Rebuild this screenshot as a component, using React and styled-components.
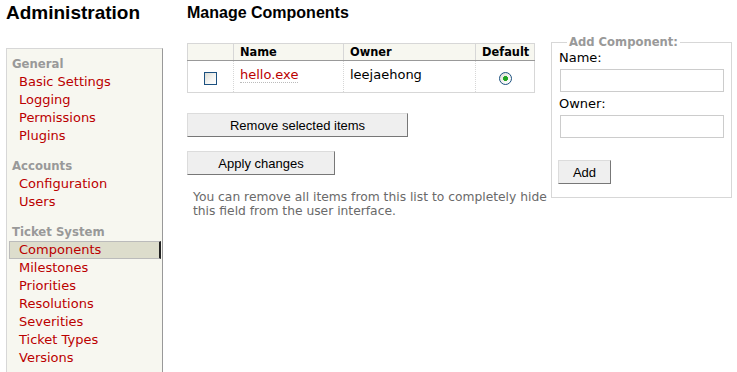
import React from 'react';
import styled, { createGlobalStyle, css } from 'styled-components';

const GlobalStyle = createGlobalStyle`
  html, body {
    margin: 0;
    padding: 0;
    background: #fff;
  }
  body {
    font-family: "DejaVu Sans", Verdana, sans-serif;
    font-size: 13px;
    color: #000;
  }
`;

const groups = [
  { title: 'General', items: ['Basic Settings', 'Logging', 'Permissions', 'Plugins'] },
  { title: 'Accounts', items: ['Configuration', 'Users'] },
  {
    title: 'Ticket System',
    items: ['Components', 'Milestones', 'Priorities', 'Resolutions', 'Severities', 'Ticket Types', 'Versions'],
  },
];

function App() {
  return (
    <>
      <GlobalStyle />
      <Page>
        <Side>
          <Title>Administration</Title>
          <Tabs>
            {groups.map((g) => (
              <Group key={g.title}>
                <GroupTitle>{g.title}</GroupTitle>
                {g.items.map((item) => (
                  <TabLink key={item} href="#" $active={item === 'Components'}>
                    {item}
                  </TabLink>
                ))}
              </Group>
            ))}
          </Tabs>
        </Side>

        <Main>
          <Heading>Manage Components</Heading>
          <Content>
            <div>
              <Listing>
                <thead>
                  <tr>
                    <Th $w={46} />
                    <Th $w={110}>Name</Th>
                    <Th $w={132}>Owner</Th>
                    <Th $w={59} $center>Default</Th>
                  </tr>
                </thead>
                <tbody>
                  <tr>
                    <Td $center>
                      <Check type="checkbox" />
                    </Td>
                    <Td>
                      <NameLink href="#">hello.exe</NameLink>
                    </Td>
                    <Td>leejaehong</Td>
                    <Td $center>
                      <Radio type="radio" name="default" defaultChecked />
                    </Td>
                  </tr>
                </tbody>
              </Listing>
              <Button type="button" $w={221} $top={20}>Remove selected items</Button>
              <Button type="button" $w={148} $top={14}>Apply changes</Button>
              <Help>
                You can remove all items from this list to completely hide
                <br />
                this field from the user interface.
              </Help>
            </div>

            <AddBox>
              <Legend>Add Component:</Legend>
              <Label $first>Name:</Label>
              <TextInput type="text" />
              <Label>Owner:</Label>
              <TextInput type="text" />
              <AddButton type="button">Add</AddButton>
            </AddBox>
          </Content>
        </Main>
      </Page>
    </>
  );
}

export default App;

const Page = styled.div`
  display: flex;
  align-items: flex-start;
  padding: 2px 0 0 6px;
`;

const Side = styled.div`
  width: 157px;
  flex: none;
`;

const Title = styled.h1`
  margin: 0;
  font: bold 19px/22px "Liberation Sans", Arial, sans-serif;
  color: #000;
`;

const Tabs = styled.nav`
  margin-top: 24px;
  box-sizing: border-box;
  background: #f7f7f0;
  border: 1px solid #d7d7d7;
  border-right-color: #999;
  padding: 7px 0 14px;
`;

const Group = styled.div`
  & + & {
    margin-top: 13px;
  }
`;

const GroupTitle = styled.div`
  padding-left: 5px;
  font-weight: bold;
  font-size: 11.7px;
  line-height: 17px;
  color: #999;
`;

const TabLink = styled.a`
  display: block;
  margin: 0 1px 0 2px;
  padding-left: 9px;
  border: 1px solid transparent;
  line-height: 16px;
  font-size: 13px;
  color: #b00;
  text-decoration: none;

  ${(p) =>
    p.$active &&
    css`
      background: #ddc;
      border-color: #bbb;
      border-right: 2px solid #222;
    `}
`;

const Main = styled.div`
  margin-left: 24px;
  flex: none;
`;

const Heading = styled.h2`
  margin: 2px 0 0;
  font: bold 16px/18px "Liberation Sans", Arial, sans-serif;
  color: #000;
`;

const Content = styled.div`
  display: grid;
  grid-template-columns: 362px 181px;
  column-gap: 2px;
  align-items: start;
  margin-top: 14px;
`;

const Listing = styled.table`
  margin-top: 7px;
  width: 348px;
  table-layout: fixed;
  border-collapse: collapse;
  border: 1px solid #d7d7d7;
`;

const Th = styled.th`
  width: ${(p) => p.$w}px;
  height: 17px;
  padding: 0 6px;
  box-sizing: border-box;
  background: #f7f7f0;
  border-left: 1px solid #d7d7d7;
  border-bottom: 1px solid #999;
  font-size: 11.4px;
  font-weight: bold;
  line-height: 15px;
  text-align: ${(p) => (p.$center ? 'center' : 'left')};
  vertical-align: middle;
  color: #000;
`;

const Td = styled.td`
  height: 32px;
  padding: 6px 6px 0;
  box-sizing: border-box;
  border: 1px dotted #d7d7d7;
  line-height: 16px;
  vertical-align: top;
  text-align: ${(p) => (p.$center ? 'center' : 'left')};
`;

const NameLink = styled.a`
  color: #b00;
  text-decoration: none;
  border-bottom: 1px dotted #bbb;
`;

const Check = styled.input`
  appearance: none;
  display: block;
  width: 13px;
  height: 13px;
  margin: 5px auto 0;
  box-sizing: border-box;
  border: 1px solid #1c5180;
  background: linear-gradient(135deg, #dcdcd4 0%, #f6f6f4 60%, #fff 100%);
`;

const Radio = styled.input`
  appearance: none;
  display: block;
  width: 13px;
  height: 13px;
  margin: 5px auto 0;
  box-sizing: border-box;
  border: 1px solid #1c5180;
  border-radius: 50%;
  background: radial-gradient(circle, #21a421 0 2.2px, transparent 2.8px),
    linear-gradient(135deg, #dcdcd4 0%, #f6f6f4 60%, #fff 100%);
`;

const Button = styled.button`
  display: block;
  width: ${(p) => p.$w}px;
  height: 24px;
  margin-top: ${(p) => p.$top}px;
  padding: 0;
  box-sizing: border-box;
  background: #efefef;
  border: 1px solid;
  border-color: #dcdcdc #777 #777 #dcdcdc;
  font: 13px "Liberation Sans", Arial, sans-serif;
  color: #000;
`;

const Help = styled.p`
  margin: 15px 0 0;
  padding-left: 6px;
  white-space: nowrap;
  font-size: 12.3px;
  line-height: 14px;
  color: #6a6a6a;
`;

const AddBox = styled.fieldset`
  margin: 0;
  min-width: 0;
  box-sizing: border-box;
  width: 181px;
  padding: 0 7px 13px;
  border: 1px solid #d7d7d7;
`;

const Legend = styled.legend`
  margin-left: 8px;
  padding: 0 2px;
  font-weight: bold;
  font-size: 11.6px;
  line-height: 13px;
  color: #999;
`;

const Label = styled.label`
  display: block;
  margin-top: ${(p) => (p.$first ? 1 : 4)}px;
  line-height: 16px;
  font-size: 13px;
  color: #000;
`;

const TextInput = styled.input`
  display: block;
  width: 164px;
  height: 23px;
  margin: 3px 0 0 1px;
  padding: 0 3px;
  box-sizing: border-box;
  border: 1px solid #ccc;
  background: #fff;
`;

const AddButton = styled(Button)`
  width: 53px;
  margin: 22px 0 0 -1px;
`;
